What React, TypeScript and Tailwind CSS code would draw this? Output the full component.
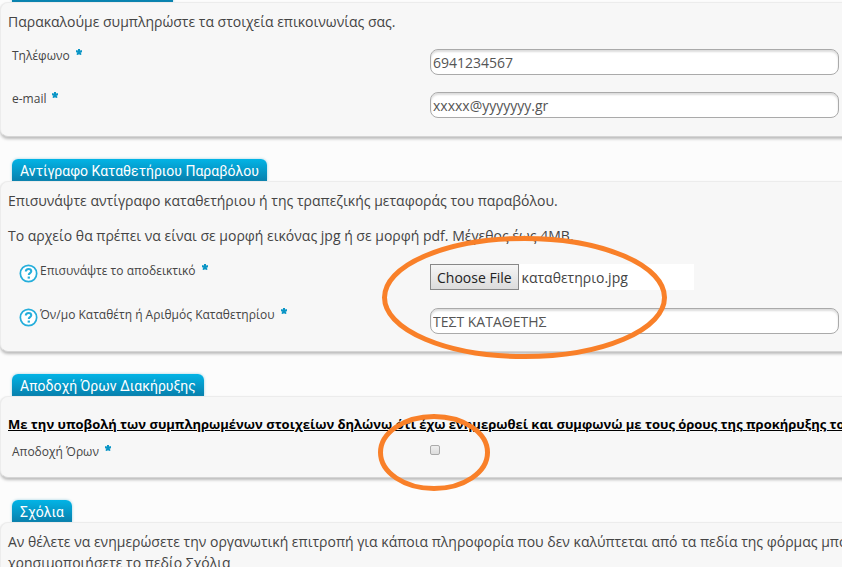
import { useRef, useState } from "react";
import type { ReactNode } from "react";

const inputClass =
  "h-[26px] w-full rounded-lg border border-[#aaa] bg-white px-[2px] text-[14px] text-[#555] shadow-[inset_0_2px_2px_#ddd] outline-none";

const Star = () => (
  <svg
    viewBox="0 0 10 10"
    className="ml-[6px] size-[6px] shrink-0 self-start"
    stroke="#0a95c6"
    strokeWidth="3.4"
    aria-hidden="true"
  >
    <path d="M5 5V0M5 5L0 3.5M5 5l5-1.5M5 5L2 9.5M5 5l3 4.5" />
  </svg>
);

const HelpIcon = () => (
  <svg viewBox="0 0 20 20" className="mr-[2px] size-[19px] shrink-0" fill="none" aria-hidden="true">
    <circle cx="10" cy="10" r="8.6" fill="#fff" stroke="#25aedb" strokeWidth="1.8" />
    <path d="M7.2 8c0-1.7 1.2-2.8 2.9-2.8s2.8 1 2.8 2.5c0 1.9-2.6 2-2.6 4" stroke="#25aedb" strokeWidth="2.2" />
    <path d="M9.1 13.2h2.4v2.2H9.1z" fill="#25aedb" />
  </svg>
);

const Section = ({ title, children }: { title: string; children: ReactNode }) => (
  <section className="mb-[22px]">
    <h2 className="ml-3 flex h-[22px] w-fit items-center rounded-t-md bg-linear-to-b from-[#02b4e6] to-[#0780ad] px-2 pt-[2px] font-['Roboto','Liberation_Sans',sans-serif] text-[14px] whitespace-nowrap text-white shadow-[0_0_3px_#9ccfe0]">
      {title}
    </h2>
    <div className="relative -mr-4 rounded-lg border border-[#ececec] border-b-[#d5d5d5] bg-[#f7f7f7] pr-4 shadow-[0_2px_3px_#bbb]">
      {children}
    </div>
  </section>
);

const Field = ({
  id,
  label,
  help,
  children,
}: {
  id: string;
  label: string;
  help?: boolean;
  children: ReactNode;
}) => (
  <div className="grid grid-cols-[429px_1fr] pr-[2px]">
    <div className={help ? "flex items-start pl-[18px]" : "flex items-start pl-[11px]"}>
      {help && <HelpIcon />}
      <label
        htmlFor={id}
        className="flex items-center text-[12px] leading-[14px] text-[#444]"
      >
        {label}
        <Star />
      </label>
    </div>
    <div>{children}</div>
  </div>
);

const FilePicker = ({ id }: { id: string }) => {
  const ref = useRef<HTMLInputElement>(null);
  const [name, setName] = useState("καταθετηριο.jpg");

  return (
    <div className="flex h-[26px] w-[264px] items-center bg-white">
      <button
        id={id}
        type="button"
        onClick={() => ref.current?.click()}
        className="h-[26px] border border-[#888] bg-linear-to-b from-[#f6f6f6] to-[#dcdcdc] px-[6px] text-[14px] text-[#222]"
      >
        Choose File
      </button>
      <span className="ml-[3px] text-[14px] text-[#444]">{name}</span>
      <input
        ref={ref}
        type="file"
        className="hidden"
        onChange={(e) => setName(e.target.files?.[0]?.name ?? name)}
      />
    </div>
  );
};

export default function App() {
  return (
    <div className="h-screen bg-white pb-[11px] font-['Open_Sans','Noto_Sans',sans-serif] text-[14px] leading-[21px] text-[#444]">
      <main className="relative h-full overflow-hidden bg-[#fcfcfc]">
        <div className="-mt-5">
          <Section title="Στοιχεία Επικοινωνίας">
            <p className="px-[7px] pt-2 whitespace-nowrap">Παρακαλούμε συμπληρώστε τα στοιχεία επικοινωνίας σας.</p>
            <div className="flex flex-col gap-[17px] pt-[17px] pb-[18px]">
              <Field id="phone" label="Τηλέφωνο">
                <input id="phone" type="tel" defaultValue="6941234567" className={inputClass} />
              </Field>
              <Field id="email" label="e-mail">
                <input id="email" type="email" defaultValue="xxxxx@yyyyyyy.gr" className={inputClass} />
              </Field>
            </div>
          </Section>

          <Section title="Αντίγραφο Καταθετήριου Παραβόλου">
            <div className="flex flex-col gap-[14px] px-[7px] pt-2 whitespace-nowrap">
              <p>Επισυνάψτε αντίγραφο καταθετήριου ή της τραπεζικής μεταφοράς του παραβόλου.</p>
              <p>Το αρχείο θα πρέπει να είναι σε μορφή εικόνας jpg ή σε μορφή pdf. Μέγεθος έως 4MB.</p>
            </div>
            <div className="flex flex-col gap-[18px] pt-[18px] pb-[17px]">
              <Field id="receipt" label="Επισυνάψτε το αποδεικτικό" help>
                <FilePicker id="receipt" />
              </Field>
              <Field id="depositor" label="Όν/μο Καταθέτη ή Αριθμός Καταθετηρίου" help>
                <input id="depositor" type="text" defaultValue="ΤΕΣΤ ΚΑΤΑΘΕΤΗΣ" className={inputClass} />
              </Field>
            </div>
          </Section>

          <Section title="Αποδοχή Όρων Διακήρυξης">
            <p className="px-[7px] pt-[17px] text-[13px] font-bold whitespace-nowrap text-black underline">
              Με την υποβολή των συμπληρωμένων στοιχείων δηλώνω ότι έχω ενημερωθεί και συμφωνώ με τους όρους της
              προκήρυξης του διαγωνισμού
            </p>
            <div className="pt-[10px] pb-[18px]">
              <Field id="terms" label="Αποδοχή Όρων">
                <input
                  id="terms"
                  type="checkbox"
                  className="block size-[10px] appearance-none rounded-xs border border-[#aaa] bg-linear-to-b from-[#eee] to-[#ddd] checked:bg-[#0a95c6]"
                />
              </Field>
            </div>
          </Section>

          <Section title="Σχόλια">
            <p className="px-[7px] pt-2 pb-10 whitespace-nowrap">
              Αν θέλετε να ενημερώσετε την οργανωτική επιτροπή για κάποια πληροφορία που δεν καλύπτεται από τα πεδία
              της φόρμας μπορείτε να
              <br />
              χρησιμοποιήσετε το πεδίο Σχόλια
            </p>
          </Section>
        </div>

        <svg
          className="pointer-events-none absolute top-0 left-0 h-[567px] w-[842px]"
          fill="none"
          stroke="#f98029"
          strokeWidth="5"
          aria-hidden="true"
        >
          <ellipse cx="524.5" cy="297.5" rx="140" ry="59" />
          <ellipse cx="434" cy="452.5" rx="53.5" ry="36" />
        </svg>
      </main>
    </div>
  );
}
